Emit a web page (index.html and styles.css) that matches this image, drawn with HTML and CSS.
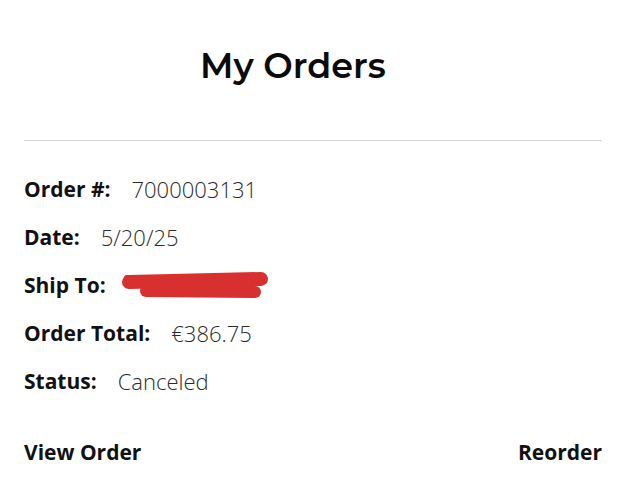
FILE: index.html
```html
<!DOCTYPE html>
<html>
<head>
<meta charset="utf-8">
<link rel="stylesheet" href="styles.css">
</head>
<body>
<div class="page">
  <h1 class="title">My Orders</h1>
  <hr class="divider">
  <div class="details">
    <div class="row"><span class="label">Order #:</span><span class="value">7000003131</span></div>
    <div class="row"><span class="label">Date:</span><span class="value">5/20/25</span></div>
    <div class="row"><span class="label">Ship To:</span>
      <svg class="redact" width="152" height="30" viewBox="0 0 152 30">
        <path d="M7 12 L139 9" stroke="#d8302f" stroke-width="14" stroke-linecap="round" fill="none"/>
        <path d="M24 21 L133 22" stroke="#d8302f" stroke-width="12" stroke-linecap="round" fill="none"/>
        <path d="M5 8 L5 15" stroke="#d8302f" stroke-width="6" stroke-linecap="round"/>
      </svg>
    </div>
    <div class="row"><span class="label">Order Total:</span><span class="value">€386.75</span></div>
    <div class="row"><span class="label">Status:</span><span class="value">Canceled</span></div>
  </div>
  <div class="actions">
    <span class="action">View Order</span>
    <span class="action">Reorder</span>
  </div>
</div>
</body>
</html>
```
FILE: styles.css
```css
html, body {
  margin: 0;
  padding: 0;
  background: #ffffff;
}
.page {
  width: 625px;
  height: 500px;
  padding: 0 23px 0 24px;
  box-sizing: border-box;
  font-family: "Open Sans", "DejaVu Sans", sans-serif;
  color: #111;
}
.title {
  margin: 0;
  padding: 43px 0 0 176px;
  font-family: "Montserrat", "Noto Sans", "Open Sans", sans-serif;
  font-weight: 600;
  font-size: 35px;
  line-height: 46px;
  color: #0b0b0b;
}
.divider {
  margin: 51px 0 0 0;
  border: 0;
  border-top: 1px solid #d4d4d4;
  height: 0;
}
.details {
  display: flex;
  flex-direction: column;
  padding-top: 33px;
  gap: 18px;
}
.row {
  display: flex;
  align-items: center;
  gap: 21px;
  height: 30px;
}
.label {
  font-weight: 700;
  font-size: 21px;
  color: #111;
}
.value {
  font-weight: 300;
  font-size: 22px;
  color: #2a2a2a;
}
.redact {
  margin-left: -5px;
  display: block;
}
.actions {
  display: flex;
  justify-content: space-between;
  padding-top: 42px;
}
.action {
  font-weight: 700;
  font-size: 21px;
  color: #111;
}
```
